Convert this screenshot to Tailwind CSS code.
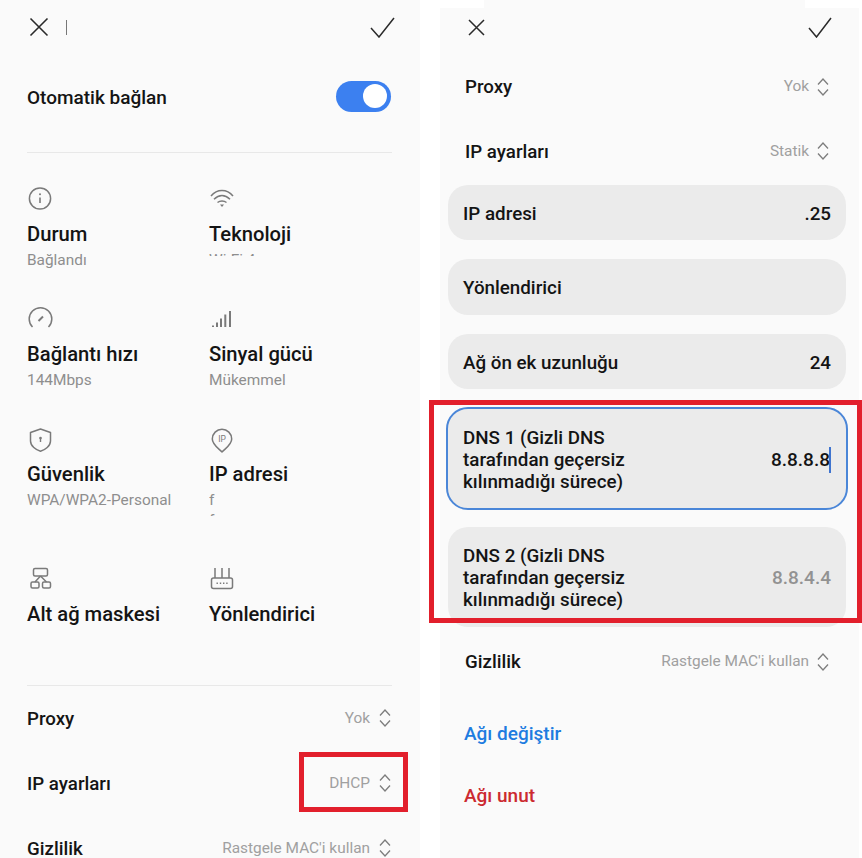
<!DOCTYPE html>
<html lang="tr">
<head>
<meta charset="utf-8">
<title>Wi-Fi ayarları</title>
<script src="https://cdn.jsdelivr.net/npm/@tailwindcss/browser@4"></script>
</head>
<body class="bg-white">
<div class="relative flex w-[862px] h-[858px] overflow-hidden bg-white font-['Roboto',sans-serif] text-[#141414]">

  <!-- LEFT PANEL -->
  <section class="w-[420px] h-[858px] shrink-0 overflow-hidden bg-[#fafafa] pl-[27px] pr-[28px]">
    <header class="flex items-center justify-between h-[52px] pt-[2px]">
      <div class="flex items-center">
        <svg class="w-[20px] h-[20px] ml-[2px]" viewBox="0 0 20 20" fill="none" stroke="#2a2a2a" stroke-width="1.6"><path d="M1.5 1.5 18.5 18.5M18.5 1.5 1.5 18.5"/></svg>
        <span class="block w-px h-[15px] ml-[17px] bg-[#777]"></span>
      </div>
      <svg class="w-[25px] h-[21px] mr-[-3px]" viewBox="0 0 25 21" fill="none" stroke="#2a2a2a" stroke-width="1.5"><path d="M1 11 9 20 24 1"/></svg>
    </header>
    <div class="flex items-center justify-between h-[90px]">
      <span class="mt-[1px] text-[19px] leading-6 font-medium">Otomatik bağlan</span>
      <span class="flex items-center justify-end w-[55px] h-[31px] mr-[1px] mb-[2px] rounded-full bg-[#3c80f0] pr-[4px]"><span class="block w-[24px] h-[24px] rounded-full bg-white"></span></span>
    </div>
    <div class="h-px mt-[10px] bg-[#e8e8e8]"></div>

    <div class="grid grid-cols-[182px_1fr] grid-rows-[120px_120px_140px_119px] mt-[33px]">
      <div>
        <svg class="w-6 h-6 overflow-visible" viewBox="0 0 24 24" fill="none" stroke="#7a7a7a" stroke-width="1.5"><circle cx="13" cy="12.5" r="10.6"/><path d="M13 11.5v5.5" stroke-width="1.6"/><circle cx="13" cy="8.3" r="1" fill="#7a7a7a" stroke="none"/></svg>
        <h3 class="mt-3 text-[20.2px] leading-6 font-medium">Durum</h3>
        <p class="mt-[4px] text-[15.4px] leading-5 text-[#8e8e8e]">Bağlandı</p>
      </div>
      <div>
        <svg class="w-6 h-6 overflow-visible" viewBox="0 0 24 24" fill="none" stroke="#7a7a7a" stroke-width="1.5"><path d="M2 10C8 2.5 18 2.5 24 10M5 13.2C10 8.2 16 8.2 21 13.2M8.5 16.5C11 14.5 15 14.5 17.5 16.5"/><path d="M11 18.5h4l-2 2.6z" fill="#7a7a7a" stroke="none"/></svg>
        <h3 class="mt-3 text-[20.2px] leading-6 font-medium">Teknoloji</h3>
        <p class="mt-[4px] h-[6px] overflow-hidden text-[15.4px] leading-5 text-[#8e8e8e]">Wi-Fi 4</p>
      </div>

      <div>
        <svg class="w-6 h-6 overflow-visible" viewBox="0 0 24 24" fill="none" stroke="#7a7a7a" stroke-width="1.5"><path d="M5.5 21A11.3 11.3 0 1 1 21.5 21"/><path d="M11.5 15 16 10.5" stroke-width="2"/></svg>
        <h3 class="mt-3 text-[20.2px] leading-6 font-medium">Bağlantı hızı</h3>
        <p class="mt-[4px] text-[15.4px] leading-5 text-[#8e8e8e]">144Mbps</p>
      </div>
      <div>
        <svg class="w-6 h-6 overflow-visible" viewBox="0 0 24 24" fill="none" stroke="#7a7a7a" stroke-width="2"><path d="M4 21v-1.5M8 21v-4.5M12 21v-8.5M16.300 21V8.500M21 21V5"/></svg>
        <h3 class="mt-3 text-[20.2px] leading-6 font-medium">Sinyal gücü</h3>
        <p class="mt-[4px] text-[15.4px] leading-5 text-[#8e8e8e]">Mükemmel</p>
      </div>

      <div>
        <svg class="w-6 h-6 overflow-visible" viewBox="0 0 24 24" fill="none" stroke="#7a7a7a" stroke-width="1.5"><path d="M13.500 3 23.500 6.500V15C23.500 20 18 24 13.500 25.300 9 24 3.500 20 3.500 15V6.500Z" stroke-linejoin="round"/><path d="M13.500 12v4" stroke-width="1.400"/><circle cx="13.500" cy="12" r="1.300" fill="#7a7a7a" stroke="none"/></svg>
        <h3 class="mt-3 text-[20.2px] leading-6 font-medium">Güvenlik</h3>
        <p class="mt-[4px] text-[15.4px] leading-5 text-[#8e8e8e]">WPA/WPA2-Personal</p>
      </div>
      <div>
        <svg class="w-6 h-6 overflow-visible" viewBox="0 0 24 24" fill="none" stroke="#7a7a7a" stroke-width="1.5"><path d="M13 26C9 22 3.300 18.500 3.300 13A9.700 9.700 0 0 1 22.700 13C22.700 18.500 17 22 13 26Z" stroke-linejoin="round"/><text x="13" y="15.500" text-anchor="middle" font-size="8.500" fill="#7a7a7a" stroke="none" font-family="Roboto">IP</text></svg>
        <h3 class="mt-3 text-[20.2px] leading-6 font-medium">IP adresi</h3>
        <p class="mt-[4px] h-[26px] overflow-hidden text-[15.4px] leading-5 text-[#8e8e8e]">f<br>f</p>
      </div>

      <div>
        <svg class="w-6 h-6 overflow-visible" viewBox="0 0 24 24" fill="none" stroke="#7a7a7a" stroke-width="1.5"><rect x="6.500" y="2.500" width="14" height="7.500" rx="1.500"/><rect x="4" y="16" width="8" height="6" rx="1.500"/><rect x="15.500" y="16" width="8" height="6" rx="1.500"/><path d="M13.500 10 8 16M13.500 10 19.500 16"/></svg>
        <h3 class="mt-3 text-[20.2px] leading-6 font-medium">Alt ağ maskesi</h3>
      </div>
      <div>
        <svg class="w-6 h-6 overflow-visible" viewBox="0 0 24 24" fill="none" stroke="#7a7a7a" stroke-width="1.5"><rect x="2.500" y="12" width="21" height="10.500" rx="2"/><path d="M6 2v10M13 2v10M20 2v10"/><path d="M7.500 17.300h1.400M10.800 17.300h1.400M14 17.300h1.400M17.200 17.300h1.400" stroke-width="1.600"/></svg>
        <h3 class="mt-3 text-[20.2px] leading-6 font-medium">Yönlendirici</h3>
      </div>
    </div>

    <div class="h-px bg-[#e8e8e8]"></div>
    <div class="flex items-center justify-between h-[65px] pr-[1px]">
      <span class="text-[18.7px] leading-6 font-medium">Proxy</span>
      <span class="flex items-center gap-[9px] text-[15.4px] text-[#a0a0a0]">Yok
        <svg class="w-3 h-[18px]" viewBox="0 0 12 18" fill="none" stroke="#7d7d7d" stroke-width="1.300"><path d="M1 6.500 6 1l5 5.500M1 11.500 6 17l5-5.500"/></svg>
      </span>
    </div>
    <div class="flex items-center justify-between h-[65px] pr-[1px]">
      <span class="text-[18.7px] leading-6 font-medium">IP ayarları</span>
      <span class="flex items-center gap-[9px] text-[15.4px] text-[#a0a0a0]">DHCP
        <svg class="w-3 h-[18px]" viewBox="0 0 12 18" fill="none" stroke="#7d7d7d" stroke-width="1.300"><path d="M1 6.500 6 1l5 5.500M1 11.500 6 17l5-5.500"/></svg>
      </span>
    </div>
    <div class="flex items-center justify-between h-[65px] pr-[1px]">
      <span class="text-[18.7px] leading-6 font-medium">Gizlilik</span>
      <span class="flex items-center gap-[9px] text-[15.4px] text-[#a0a0a0]">Rastgele MAC'i kullan
        <svg class="w-3 h-[18px]" viewBox="0 0 12 18" fill="none" stroke="#7d7d7d" stroke-width="1.300"><path d="M1 6.500 6 1l5 5.500M1 11.500 6 17l5-5.500"/></svg>
      </span>
    </div>
  </section>

  <!-- RIGHT PANEL -->
  <section class="w-[419px] h-[858px] shrink-0 ml-[20px] overflow-hidden bg-[#fafafa]">
    <header class="flex items-center justify-between h-[55px] pl-[28px] pr-[27px]">
      <svg class="w-[17px] h-[17px]" viewBox="0 0 17 17" fill="none" stroke="#2a2a2a" stroke-width="1.500"><path d="M1 1 16 16M16 1 1 16"/></svg>
      <svg class="w-[24px] h-[21px]" viewBox="0 0 24 21" fill="none" stroke="#2a2a2a" stroke-width="1.500"><path d="M1 11 8.500 20 23 1"/></svg>
    </header>
    <div class="flex items-center justify-between h-[64px] pl-[25px] pr-[30px]">
      <span class="text-[18.7px] leading-6 font-medium">Proxy</span>
      <span class="flex items-center gap-[8px] text-[15.4px] text-[#a0a0a0]">Yok
        <svg class="w-3 h-[18px]" viewBox="0 0 12 18" fill="none" stroke="#7d7d7d" stroke-width="1.300"><path d="M1 6.500 6 1l5 5.500M1 11.500 6 17l5-5.500"/></svg>
      </span>
    </div>
    <div class="flex items-center justify-between h-[64px] pt-[1px] pl-[25px] pr-[30px]">
      <span class="text-[18.7px] leading-6 font-medium">IP ayarları</span>
      <span class="flex items-center gap-[8px] text-[15.4px] text-[#a0a0a0]">Statik
        <svg class="w-3 h-[18px]" viewBox="0 0 12 18" fill="none" stroke="#7d7d7d" stroke-width="1.300"><path d="M1 6.500 6 1l5 5.500M1 11.500 6 17l5-5.500"/></svg>
      </span>
    </div>

    <div class="flex flex-col gap-[19px] mt-[2px] ml-[8px] mr-[13px]">
      <div class="flex items-center justify-between h-[55px] rounded-[20px] bg-[#ebebeb] pt-[3px] px-[15px] text-[18.8px] font-medium">
        <span>IP adresi</span><span>.25</span>
      </div>
      <div class="flex items-center h-[56px] rounded-[20px] bg-[#ebebeb] pt-[3px] px-[15px] text-[18.8px] font-medium">
        <span>Yönlendirici</span>
      </div>
      <div class="flex items-center justify-between h-[55px] rounded-[20px] bg-[#ebebeb] pt-[3px] px-[15px] text-[18.8px] font-medium">
        <span>Ağ ön ek uzunluğu</span><span>24</span>
      </div>
    </div>

    <div class="flex items-center justify-between h-[103px] mt-[18px] ml-[6px] mr-[11px] rounded-[22px] border-2 border-[#4a86d8] bg-[#ebebeb] pt-[2px] pl-[15px] pr-[15px] text-[18.8px] leading-[22px] font-medium">
      <span class="w-[190px]">DNS 1 (Gizli DNS tarafından geçersiz kılınmadığı sürece)</span>
      <span class="flex items-center text-[19px]">8.8.8.8<span class="block w-[2px] h-[26px] ml-[-1px] bg-[#3f74cf]"></span></span>
    </div>
    <div class="flex items-center justify-between h-[100px] mt-[17px] ml-[8px] mr-[13px] rounded-[20px] bg-[#ebebeb] pt-[2px] px-[15px] text-[18.8px] leading-[22px] font-medium">
      <span class="w-[190px]">DNS 2 (Gizli DNS tarafından geçersiz kılınmadığı sürece)</span>
      <span class="text-[19px] text-[#929292]">8.8.4.4</span>
    </div>

    <div class="flex items-center justify-between h-[64px] mt-[3px] pl-[25px] pr-[30px]">
      <span class="text-[18.7px] leading-6 font-medium">Gizlilik</span>
      <span class="flex items-center gap-[8px] text-[15.4px] text-[#a0a0a0]">Rastgele MAC'i kullan
        <svg class="w-3 h-[18px]" viewBox="0 0 12 18" fill="none" stroke="#7d7d7d" stroke-width="1.300"><path d="M1 6.500 6 1l5 5.500M1 11.500 6 17l5-5.500"/></svg>
      </span>
    </div>
    <div class="flex items-center h-[62px] mt-[9px] pl-[24px] text-[19px] font-medium text-[#1e7ce0]">Ağı değiştir</div>
    <div class="flex items-center h-[62px] pl-[24px] text-[19px] font-medium text-[#cc2a30]">Ağı unut</div>
  </section>

  <!-- White notches at the top of the right screenshot, and red annotation frames over it -->
  <div class="absolute left-[440px] top-0 w-[44px] h-[8px] bg-white"></div>
  <div class="absolute left-[805px] top-0 w-[54px] h-[8px] bg-white"></div>
  <div class="absolute left-[299px] top-[752px] w-[109px] h-[60px] border-[5px] border-[#e21f2c]"></div>
  <div class="absolute left-[429px] top-[400px] w-[433px] h-[223px] border-[5px] border-[#e21f2c]"></div>
</div>
</body>
</html>
